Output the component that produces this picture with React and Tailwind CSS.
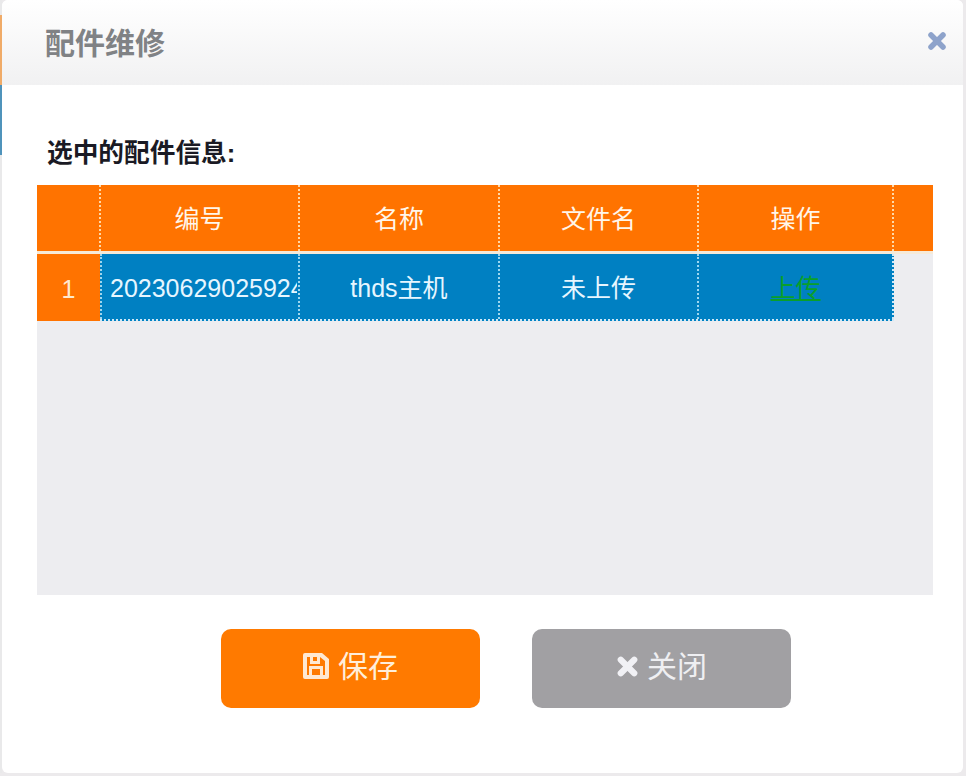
import React from "react";
import { X } from "lucide-react";

const font = "font-['Liberation_Sans','Noto_Sans_CJK_SC',sans-serif]";
const cell = "flex items-center justify-center overflow-hidden whitespace-nowrap pt-[4px]";

function FloppyIcon() {
  return (
    <svg width="26" height="28" viewBox="0 0 26 28" className="shrink-0">
      <path fill="#ffe9d2" fillRule="evenodd" d="M0 3a2 2 0 0 1 2-2h17l7 6v18a2 2 0 0 1-2 2H2a2 2 0 0 1-2-2ZM4 5v18h2v-9h14v9h2V9l-5-4v7H7V5ZM10 5v4h4V5ZM9 17v6h8v-6Z" />
    </svg>
  );
}

function CloseGlyph({ size, color }) {
  return <X size={size} color={color} strokeWidth={5.5} strokeLinecap="round" className="shrink-0" />;
}

export default function App() {
  return (
    <div className={`${font} flex h-[776px] w-[966px] bg-[#eceaec] pb-[3px] pr-[3px]`}>
      <div className="flex w-[2px] shrink-0 flex-col bg-[#e9e9ea] pt-[15px]">
        <div className="h-[70px] bg-[#f0ab68]" />
        <div className="h-[70px] bg-[#4f93bb]" />
      </div>
      <div className="flex min-w-0 flex-1 flex-col rounded-[6px] bg-white">
        <div className="flex h-[85px] shrink-0 items-center justify-between rounded-t-[6px] bg-gradient-to-b from-white to-[#f1f1f2] pl-[43px] pr-[14px]">
          <span className="pt-[2px] text-[30px] leading-none font-bold text-[#808285]">配件维修</span>
          <span className="pb-[4px]"><CloseGlyph size={24} color="#8ea3cb" /></span>
        </div>
        <div className="flex flex-1 flex-col pl-[35px] pr-[30px]">
          <div className="pl-[10px] pt-[52px] text-[25.7px] leading-[32px] font-bold text-[#1a1a24]">选中的配件信息:</div>
          <div className="mt-[16px] h-[410px] bg-[#ededf0] text-[25px] text-[#fff6ea]">
            <div className="flex h-[66px] bg-[#ff7300]">
              <div className="w-[64px] border-r-2 border-dotted border-[#ffd9a8]" />
              <div className={`${cell} w-[199px] border-r-2 border-dotted border-[#ffd9a8]`}>编号</div>
              <div className={`${cell} w-[200px] border-r-2 border-dotted border-[#ffd9a8]`}>名称</div>
              <div className={`${cell} w-[199px] border-r-2 border-dotted border-[#ffd9a8]`}>文件名</div>
              <div className={`${cell} w-[195px] border-r-2 border-dotted border-[#ffd9a8]`}>操作</div>
              <div className="flex-1" />
            </div>
            <div className="h-[3px] bg-[#f6ead8]" />
            <div className="flex h-[67px] w-[857px]">
              <div className={`${cell} w-[63px] bg-[#ff7300] text-[#ffe9cf]`}>1</div>
              <div className="flex flex-1 border-b-2 border-dotted border-[#cfe9f7] bg-[#0080c2] text-[#e6f6ff]">
                <div className="flex w-[200px] items-center border-l-2 border-r-2 border-dotted border-[#9fd6ee] pl-[8px] pt-[4px]">
                  <span className="w-[187px] overflow-hidden whitespace-nowrap">20230629025924</span>
                </div>
                <div className={`${cell} w-[200px] border-r-2 border-dotted border-[#9fd6ee]`}>thds主机</div>
                <div className={`${cell} w-[199px] border-r-2 border-dotted border-[#9fd6ee]`}>未上传</div>
                <div className={`${cell} flex-1 border-r-2 border-dotted border-[#cfe9f7]`}>
                  <span className="text-[#0a9f2a] underline">上传</span>
                </div>
              </div>
            </div>
          </div>
          <div className="flex gap-[52px] pl-[184px] pt-[34px]">
            <button className="flex h-[79px] w-[259px] items-center justify-center gap-[9px] rounded-[10px] bg-[#ff7a00] pb-[5px] text-[30px] text-[#ffeeda]">
              <FloppyIcon />
              <span>保存</span>
            </button>
            <button className="flex h-[79px] w-[259px] items-center justify-center gap-[6px] rounded-[10px] bg-[#a1a0a3] pb-[5px] pr-[2px] text-[30px] text-[#efeff2]">
              <CloseGlyph size={27} color="#f1f1f5" />
              <span>关闭</span>
            </button>
          </div>
        </div>
      </div>
    </div>
  );
}
